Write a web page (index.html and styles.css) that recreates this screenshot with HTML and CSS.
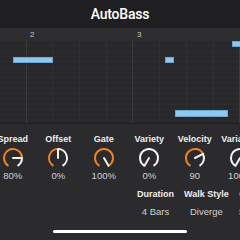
FILE: index.html
```html
<!DOCTYPE html>
<html lang="en">
<head>
  <meta charset="UTF-8">
  <title>AutoBass</title>
  <meta name="viewport" content="width=device-width, initial-scale=1.0">
  <link rel="stylesheet" href="styles.css">
</head>
<body>
  <header class="titlebar">
    <h1>AutoBass</h1>
  </header>

  <section class="roll">
    <div class="ruler">
      <span class="bar-num bar-2">2</span>
      <span class="bar-num bar-3">3</span>
    </div>
    <div class="grid">
      <div class="note note-a"></div>
      <div class="note note-b"></div>
      <div class="note note-c"></div>
      <div class="note note-d"></div>
    </div>
  </section>

  <section class="controls">
    <div class="knobs">
      <div class="knob">
        <span class="label">Spread</span>
        <svg width="24" height="24" viewBox="0 0 24 24">
          <path class="arc-on" d="M7.5 19.794 A9 9 0 1 1 21 12"/>
          <path class="arc-off" d="M21 12 A9 9 0 0 1 16.5 19.794"/>
          <line class="pointer" x1="12" y1="12" x2="21" y2="12"/>
        </svg>
        <span class="value">80%</span>
      </div>
      <div class="knob">
        <span class="label">Offset</span>
        <svg width="24" height="24" viewBox="0 0 24 24">
          <path class="arc-on" d="M7.5 19.794 A9 9 0 0 1 12 3"/>
          <path class="arc-off" d="M12 3 A9 9 0 0 1 16.5 19.794"/>
          <line class="pointer" x1="12" y1="12" x2="12" y2="3"/>
        </svg>
        <span class="value">0%</span>
      </div>
      <div class="knob">
        <span class="label">Gate</span>
        <svg width="24" height="24" viewBox="0 0 24 24">
          <path class="arc-on" d="M7.5 19.794 A9 9 0 1 1 16.5 19.794"/>
          <line class="pointer" x1="12" y1="12" x2="16.5" y2="19.794"/>
        </svg>
        <span class="value">100%</span>
      </div>
      <div class="knob">
        <span class="label">Variety</span>
        <svg width="24" height="24" viewBox="0 0 24 24">
          <path class="arc-off" d="M7.5 19.794 A9 9 0 1 1 16.5 19.794"/>
          <line class="pointer" x1="12" y1="12" x2="7.5" y2="19.794"/>
        </svg>
        <span class="value">0%</span>
      </div>
      <div class="knob">
        <span class="label">Velocity</span>
        <svg width="24" height="24" viewBox="0 0 24 24">
          <path class="arc-on" d="M7.5 19.794 A9 9 0 1 1 19.947 7.779"/>
          <path class="arc-off" d="M19.947 7.779 A9 9 0 0 1 16.5 19.794"/>
          <line class="pointer" x1="12" y1="12" x2="19.947" y2="7.779"/>
        </svg>
        <span class="value">90</span>
      </div>
      <div class="knob">
        <span class="label">Variation</span>
        <svg width="24" height="24" viewBox="0 0 24 24">
          <path class="arc-off" d="M7.5 19.794 A9 9 0 1 1 16.5 19.794"/>
          <line class="pointer" x1="12" y1="12" x2="7.5" y2="19.794"/>
        </svg>
        <span class="value">100%</span>
      </div>
    </div>

    <div class="params">
      <div class="param">
        <span class="label">Duration</span>
        <span class="value">4 Bars</span>
      </div>
      <div class="param">
        <span class="label">Walk Style</span>
        <span class="value">Diverge</span>
      </div>
      <div class="param">
        <span class="label">Groove</span>
        <span class="value">Straight</span>
      </div>
    </div>

    <div class="home-bar"></div>
  </section>
</body>
</html>
```

FILE: styles.css
```css
body {
  font-family: 'Liberation Sans', Arial, sans-serif;
  margin: 0;
  width: 240px;
  height: 240px;
  overflow: hidden;
  background-color: #2b2b2e;
  color: #f2f2f2;
}

.titlebar {
  height: 28px;
  background-color: #1f1f21;
  display: flex;
  align-items: center;
  justify-content: center;
}

.titlebar h1 {
  margin: 0;
  font-family: Roboto, 'Liberation Sans', sans-serif;
  font-size: 14px;
  font-weight: 500;
  letter-spacing: -0.2px;
  color: #ffffff;
}

.ruler {
  height: 13px;
  background-color: #2e2e31;
  position: relative;
  font-size: 8px;
  color: #c8c8c8;
}

.bar-num {
  position: absolute;
  top: 2px;
}

.bar-2 {
  left: 30px;
}

.bar-3 {
  left: 137px;
}

.grid {
  height: 82px;
  position: relative;
  overflow: hidden;
  background-color: #28282a;
  background-image:
    repeating-linear-gradient(to right, transparent 0 25.7px, #3b3b3e 25.7px 26.7px, transparent 26.7px 106.7px),
    repeating-linear-gradient(to right, transparent 0 25.7px, #303033 25.7px 26.7px),
    repeating-linear-gradient(to bottom, transparent 0 4.3px, #2d2d30 4.3px 5.3px);
  border-bottom: 1px solid #1f1f21;
}

.note {
  position: absolute;
  height: 6px;
  background-color: #8fc8ee;
  box-shadow: inset 0 0 0 1px #6ea6cc;
}

.note-a {
  top: 16px;
  left: 13px;
  width: 40px;
}

.note-b {
  top: 16px;
  left: 165px;
  width: 9px;
}

.note-c {
  top: 0;
  left: 232px;
  width: 10px;
}

.note-d {
  top: 69px;
  left: 175px;
  width: 53px;
  height: 7px;
}

.controls {
  padding-top: 9px;
}

.knobs {
  display: flex;
  margin-left: -10px;
}

.knob {
  flex: 0 0 45.5px;
  display: flex;
  flex-direction: column;
  align-items: center;
}

.label {
  font-size: 9px;
  font-weight: bold;
  line-height: 13px;
  white-space: nowrap;
  color: #ededed;
}

.value {
  font-size: 9.5px;
  line-height: 11px;
  white-space: nowrap;
  color: #cfcfcf;
}

.knob svg {
  display: block;
  fill: none;
  stroke-width: 2;
}

.arc-on {
  stroke: #f0831f;
}

.arc-off {
  stroke: #f2f2f2;
}

.pointer {
  stroke: #f2f2f2;
  stroke-linecap: round;
}

.params {
  display: flex;
  gap: 10px;
  margin-top: 7px;
  padding-left: 137px;
}

.param {
  display: flex;
  flex-direction: column;
  align-items: center;
  gap: 5px;
}

.home-bar {
  width: 134px;
  height: 3px;
  margin: 13px auto 0;
  background-color: #ffffff;
  border-radius: 2px;
}
```
